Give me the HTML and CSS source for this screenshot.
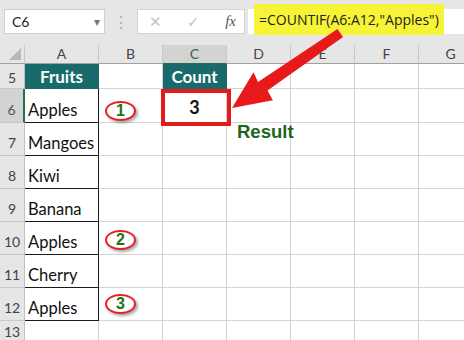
FILE: index.html
```html
<!DOCTYPE html>
<html lang="en">
<head>
    <meta charset="UTF-8">
    <title>COUNTIF</title>
    <link rel="stylesheet" href="styles.css">
</head>
<body>
    <div class="page">
        <div class="toolbar">
            <div class="namebox"><span>C6</span><span class="caret">&#9662;</span></div>
            <div class="grip">&#8942;</div>
            <div class="fxbox">
                <span class="fxbtn">&#10005;</span>
                <span class="fxbtn">&#10003;</span>
                <span class="fxbtn fx">fx</span>
            </div>
            <div class="formula"><span class="hilite">=COUNTIF(A6:A12,"Apples")</span></div>
        </div>

        <div class="sheet">
            <div class="ch corner"><span class="tri"></span></div>
            <div class="ch">A</div>
            <div class="ch">B</div>
            <div class="ch sel">C</div>
            <div class="ch">D</div>
            <div class="ch">E</div>
            <div class="ch">F</div>
            <div class="ch">G</div>

            <div class="rh r5">5</div>
            <div class="c hd">Fruits</div>
            <div class="c"></div>
            <div class="c hd">Count</div>
            <div class="c"></div><div class="c"></div><div class="c"></div><div class="c"></div>

            <div class="rh sel">6</div>
            <div class="c fa">Apples</div>
            <div class="c"></div>
            <div class="c num">3</div>
            <div class="c"></div><div class="c"></div><div class="c"></div><div class="c"></div>

            <div class="rh">7</div>
            <div class="c fa">Mangoes</div>
            <div class="c"></div><div class="c"></div><div class="c"></div><div class="c"></div><div class="c"></div><div class="c"></div>

            <div class="rh">8</div>
            <div class="c fa">Kiwi</div>
            <div class="c"></div><div class="c"></div><div class="c"></div><div class="c"></div><div class="c"></div><div class="c"></div>

            <div class="rh">9</div>
            <div class="c fa">Banana</div>
            <div class="c"></div><div class="c"></div><div class="c"></div><div class="c"></div><div class="c"></div><div class="c"></div>

            <div class="rh">10</div>
            <div class="c fa">Apples</div>
            <div class="c"></div><div class="c"></div><div class="c"></div><div class="c"></div><div class="c"></div><div class="c"></div>

            <div class="rh">11</div>
            <div class="c fa">Cherry</div>
            <div class="c"></div><div class="c"></div><div class="c"></div><div class="c"></div><div class="c"></div><div class="c"></div>

            <div class="rh">12</div>
            <div class="c fa">Apples</div>
            <div class="c"></div><div class="c"></div><div class="c"></div><div class="c"></div><div class="c"></div><div class="c"></div>

            <div class="rh r13">13</div>
            <div class="c"></div>
            <div class="c"></div><div class="c"></div><div class="c"></div><div class="c"></div><div class="c"></div><div class="c"></div>
        </div>

        <!-- annotations -->
        <div class="redbox"></div>
        <div class="result">Result</div>
        <div class="badge b1">1</div>
        <div class="badge b2">2</div>
        <div class="badge b3">3</div>
        <svg class="arrow" width="464" height="340" viewBox="0 0 464 340">
            <polygon fill="#e8191a" points="343,37 337.5,29 258,82 253.5,72.3 232,108 272.9,100.3 267.5,90.5"/>
        </svg>
    </div>
</body>
</html>
```

FILE: styles.css
```css
body {
    margin: 0;
    padding: 0;
    background-color: #fff;
    font-family: Lato, "Open Sans", sans-serif;
}

.page {
    position: relative;
    width: 464px;
    height: 340px;
    overflow: hidden;
}

/* formula bar */
.toolbar {
    height: 45px;
    background-color: #e6e6e6;
    display: flex;
    align-items: flex-start;
    box-sizing: border-box;
    padding: 9px 0 0 4px;
}

.namebox {
    width: 101px;
    height: 25px;
    box-sizing: border-box;
    background-color: #fff;
    border: 1px solid #cfcfcf;
    display: flex;
    align-items: center;
    justify-content: space-between;
    padding: 0 4px 0 7px;
    font-size: 14px;
    color: #222;
}

.caret {
    color: #777;
    font-size: 12px;
}

.grip {
    width: 32px;
    text-align: center;
    color: #aaa;
    font-size: 16px;
    line-height: 25px;
}

.fxbox {
    width: 108px;
    height: 25px;
    box-sizing: border-box;
    background-color: #fff;
    border: 1px solid #d4d4d4;
    display: flex;
    align-items: center;
    justify-content: space-between;
    padding: 0 8px 0 11px;
}

.fxbtn {
    color: #c4c4c4;
    font-size: 15px;
    font-family: "DejaVu Sans", sans-serif;
}

.fx {
    color: #555;
    font-family: "Liberation Serif", serif;
    font-style: italic;
    font-size: 15px;
}

.formula {
    flex: 1;
    height: 25px;
    margin-left: 3px;
    background-color: #fff;
    position: relative;
}

.hilite {
    position: absolute;
    left: 6px;
    top: -5px;
    width: 190px;
    height: 31px;
    box-sizing: border-box;
    padding-left: 5px;
    background-color: #f7f437;
    font-family: "Open Sans", sans-serif;
    font-size: 14px;
    line-height: 31px;
    color: #222;
    white-space: nowrap;
}

/* grid */
.sheet {
    display: grid;
    grid-template-columns: 25px 74px 64px 64px 64px 64px 64px 64px;
    grid-template-rows: 19px 25px 34px 33px 33px 33px 33px 33px 33px 33px;
}

.ch {
    background-color: #e6e6e6;
    border-right: 1px solid #c8c8c8;
    border-bottom: 1px solid #a0a0a0;
    box-sizing: border-box;
    text-align: center;
    font-size: 14px;
    line-height: 18px;
    color: #444;
}

.ch.sel {
    background-color: #d3d3d3;
    color: #3f5f4a;
    border-bottom: 1px solid #217346;
}

.corner {
    position: relative;
}

.tri {
    position: absolute;
    right: 3px;
    bottom: 3px;
    width: 0;
    height: 0;
    border-left: 12px solid transparent;
    border-bottom: 12px solid #b8b8b8;
}

.rh {
    background-color: #e6e6e6;
    border-right: 1px solid #c0c0c0;
    border-bottom: 1px solid #c8c8c8;
    box-sizing: border-box;
    display: flex;
    align-items: flex-end;
    justify-content: center;
    font-size: 14px;
    padding-bottom: 4px;
    color: #444;
}

.rh.r5 {
    padding-bottom: 2px;
}

.rh.r13 {
    align-items: flex-start;
    padding: 2px 0 0 0;
}

.rh.sel {
    background-color: #d3d3d3;
    color: #3f5f4a;
    border-right: 2px solid #217346;
}

.c {
    border-right: 1px solid #d4d4d4;
    border-bottom: 1px solid #d4d4d4;
    box-sizing: border-box;
    display: flex;
    align-items: flex-end;
    padding: 0 0 2px 3px;
    font-size: 16.5px;
    line-height: 20px;
    color: #111;
}

.hd {
    background-color: #186a6b;
    border-color: #186a6b;
    color: #fff;
    font-weight: bold;
    justify-content: center;
    padding: 0 0 1px 0;
    font-size: 17px;
}

.fa {
    border-right: 1px solid #1a1a1a;
    border-bottom: 1px solid #1a1a1a;
}

.num {
    justify-content: center;
    font-weight: bold;
    font-size: 18px;
    padding: 0 0 5px 0;
}

/* annotations */
.redbox {
    position: absolute;
    left: 161px;
    top: 89px;
    width: 70px;
    height: 37px;
    box-sizing: border-box;
    border: 4px solid #e31b1b;
}

.result {
    position: absolute;
    left: 237px;
    top: 121px;
    font-family: "Liberation Sans", Arial, sans-serif;
    font-weight: bold;
    font-size: 18.5px;
    color: #1d661d;
}

.badge {
    position: absolute;
    left: 105px;
    width: 31px;
    height: 20px;
    box-sizing: border-box;
    border: 2px solid #e32222;
    border-radius: 50%;
    background-color: #fff;
    box-shadow: 2px 2px 3px rgba(0, 0, 0, 0.35);
    text-align: center;
    font-family: "Liberation Sans", Arial, sans-serif;
    font-weight: bold;
    font-size: 16px;
    line-height: 16px;
    color: #237023;
}

.b1 { top: 101px; }
.b2 { top: 230px; }
.b3 { top: 294px; }

.arrow {
    position: absolute;
    left: 0;
    top: 0;
}
```
